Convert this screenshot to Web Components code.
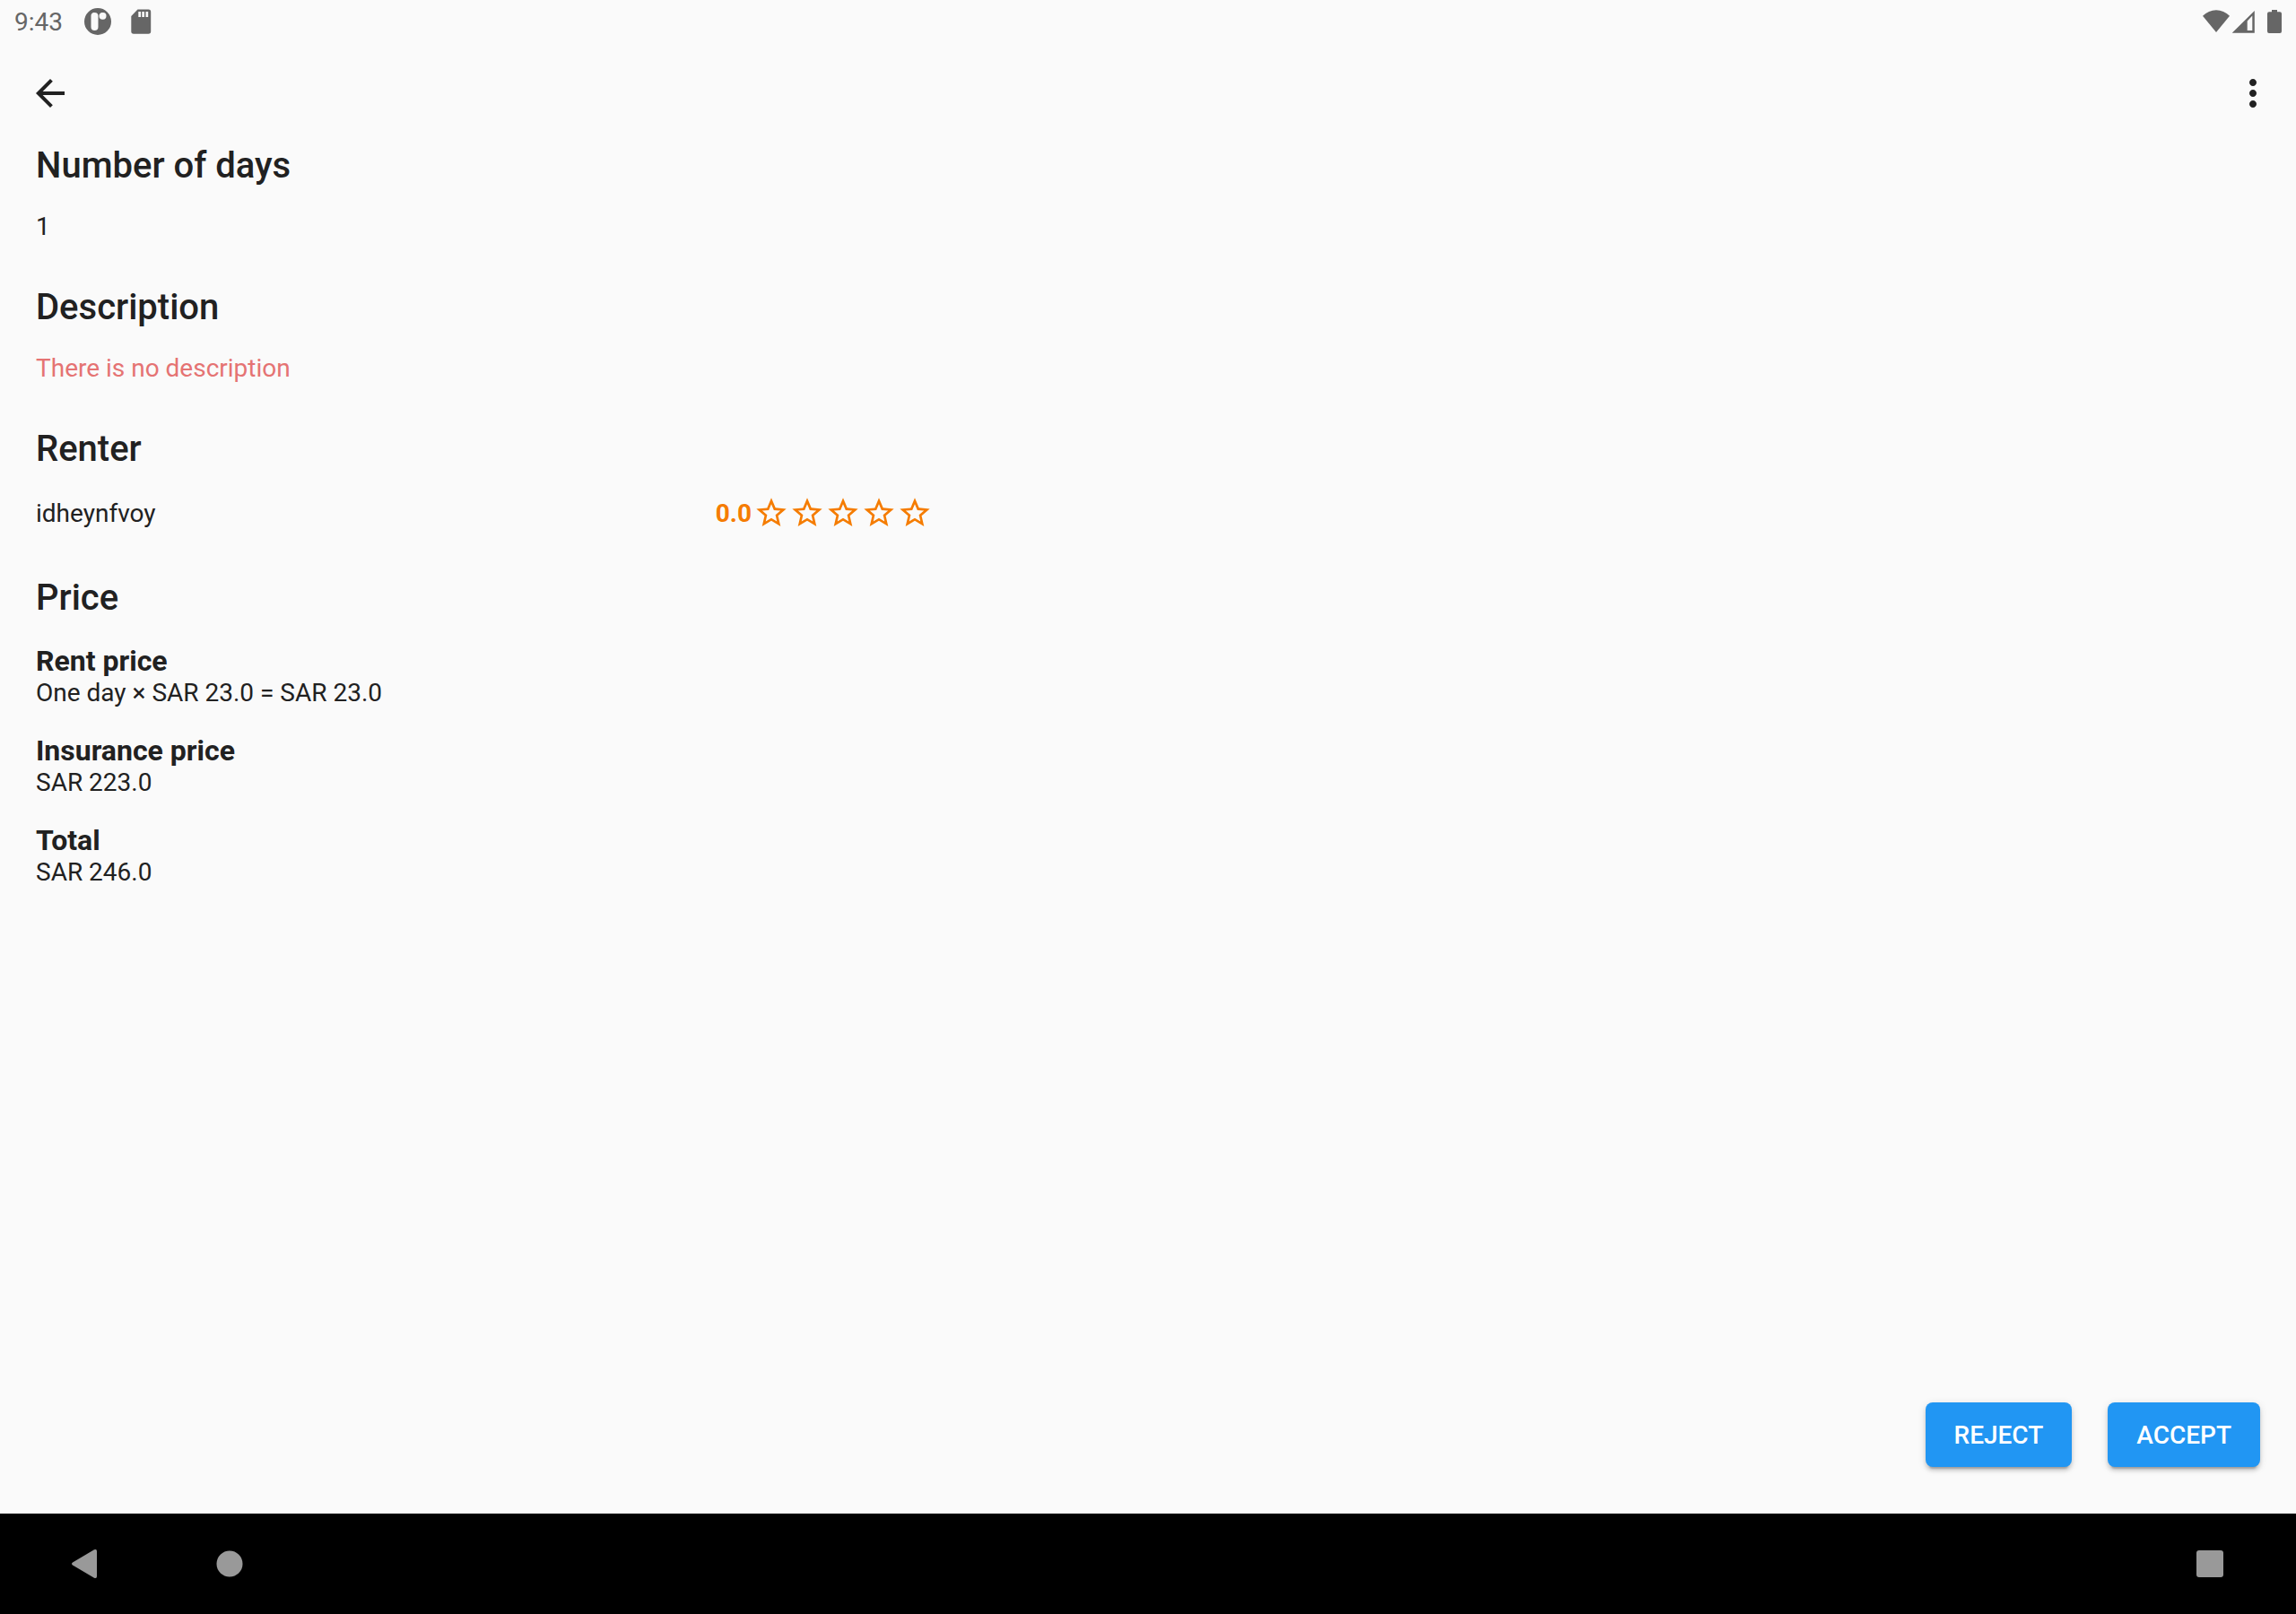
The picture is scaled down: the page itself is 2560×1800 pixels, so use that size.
<!DOCTYPE html>
<html lang="en">
<head>
<meta charset="utf-8">
<title>Rent request</title>
<style>
  html, body { height: 100%; }
  body { margin: 0; background: #fafafa; color: #212121; font: 400 28px/34px Roboto, sans-serif; }
</style>
</head>
<body>
<rent-page></rent-page>
<script>
function define(name, html) {
  const template = document.createElement('template');
  template.innerHTML = '<style>*{box-sizing:border-box}svg{display:block;flex:none}button{border:0;margin:0;padding:0;background:none;color:inherit;font:inherit;cursor:pointer}</style>' + html;
  customElements.define(name, class extends HTMLElement {
    constructor() {
      super();
      this.attachShadow({ mode: 'open' }).append(template.content.cloneNode(true));
    }
  });
}

define('status-bar', `
  <style>
    :host { display: flex; justify-content: space-between; height: 48px; padding: 0 16px; color: #666; fill: #666; }
    div { display: flex; align-items: center; }
    time { margin-right: 23px; padding-top: 2px; }
    .apps { gap: 16px; display: flex; }
  </style>
  <div>
    <time>9:43</time>
    <span class="apps">
      <svg width="32" height="32" viewBox="0 0 32 32"><path fill-rule="evenodd" d="M16 1a15 15 0 1 0 0 30a15 15 0 1 0 0-30zM11 6h1.500a4 4 0 0 1 4 4v12a4 4 0 0 1-8 0V10a4 4 0 0 1 2.500-4zM20.500 6H22a3.500 3.500 0 0 1 3.500 3.500a4 4 0 1 1-8 0.500a4 4 0 0 1 3-4z"/></svg>
      <svg width="32" height="32" viewBox="0 0 32 32"><path fill-rule="evenodd" d="M12.500 2.500H24.500a2.700 2.700 0 0 1 2.700 2.700V27a2.700 2.700 0 0 1-2.700 2.700H8A2.700 2.700 0 0 1 5.300 27V10zM13.300 5v6h2.700V5zM17.300 5v6H20V5zM21.500 5v6h2.700V5z"/></svg>
    </span>
  </div>
  <div>
    <svg width="32" height="32" viewBox="0 0 32 32"><path d="M0 9.700Q6.500 3.500 15 3.300Q23.500 3.500 30 9.700L15 28z"/></svg>
    <svg width="32" height="32" viewBox="0 0 32 32"><path fill-rule="evenodd" d="M25.800 4v24.700H0.700zM23.300 9.500L17.700 15.500V26h5.600z"/></svg>
    <svg width="24" height="32" viewBox="0 0 24 32"><path d="M13 3h6v2.300h3a2 2 0 0 1 2 2V27a2 2 0 0 1-2 2H10a2 2 0 0 1-2-2V7.300a2 2 0 0 1 2-2h3z"/></svg>
  </div>`);

define('app-toolbar', `
  <style>
    :host { display: flex; align-items: center; justify-content: space-between; height: 112px; padding: 0 24px 0 32px; fill: #212121; }
  </style>
  <button aria-label="Back"><svg width="48" height="48" viewBox="0 0 24 24"><path d="M20 11H7.830l5.590-5.590L12 4l-8 8 8 8 1.410-1.410L7.830 13H20v-2z"/></svg></button>
  <button aria-label="More options"><svg width="48" height="48" viewBox="0 0 24 24"><path d="M12 8c1.100 0 2-.9 2-2s-.9-2-2-2-2 .9-2 2 .9 2 2 2zm0 2c-1.100 0-2 .9-2 2s.9 2 2 2 2-.9 2-2-.9-2-2-2zm0 6c-1.100 0-2 .9-2 2s.9 2 2 2 2-.9 2-2-.9-2-2-2z"/></svg></button>`);

define('detail-section', `
  <style>
    :host { display: flex; flex-direction: column; gap: 26px; }
    h2 { margin: 0; font-size: 40px; line-height: 50px; font-weight: 500; }
  </style>
  <h2><slot name="title"></slot></h2>
  <slot></slot>`);

define('price-item', `
  <style>
    :host { display: block; }
    h3 { margin: 0; font-size: 32px; line-height: 38px; font-weight: 700; }
  </style>
  <h3><slot name="label"></slot></h3>
  <div><slot></slot></div>`);

const star = '<svg width="40" height="40" viewBox="0 0 24 24" aria-hidden="true"><path d="M22 9.240l-7.190-.620L12 2 9.190 8.630 2 9.240l5.460 4.730L5.820 21 12 17.270 18.180 21l-1.630-7.030L22 9.240zM12 15.400l-3.760 2.270 1-4.280-3.320-2.880 4.380-.380L12 6.100l1.710 4.040 4.380.380-3.320 2.880 1 4.280L12 15.400z"/></svg>';
define('star-rating', `
  <style>
    :host { display: flex; align-items: center; gap: 2px; height: 42px; color: #f57c00; fill: #f57c00; font-weight: 700; }
    .stars { display: flex; align-self: flex-start; }
  </style>
  <slot></slot><span class="stars">${star.repeat(5)}</span>`);

define('raised-button', `
  <style>
    :host { display: block; }
    button { display: block; height: 72px; padding: 2px 32px 0; border-radius: 8px; background: #2196f3; color: #fff; font-weight: 500;
      box-shadow: 0 6px 2px -4px rgba(0,0,0,.2), 0 4px 4px rgba(0,0,0,.14), 0 2px 10px rgba(0,0,0,.12); }
  </style>
  <button><slot></slot></button>`);

define('system-nav', `
  <style>
    :host { display: flex; align-items: center; gap: 96px; height: 112px; padding: 0 64px; background: #000; fill: #999; }
    .recent { margin-left: auto; }
  </style>
  <button aria-label="System back"><svg width="64" height="64" viewBox="0 0 64 64"><path d="M17 30.500L41 16.300Q44 15 44 18V46Q44 49 41 47.700L17 33.500Q15 32 17 30.500z"/></svg></button>
  <button aria-label="Home"><svg width="64" height="64" viewBox="0 0 64 64"><circle cx="32" cy="32" r="14.500"/></svg></button>
  <button class="recent" aria-label="Recent apps"><svg width="64" height="64" viewBox="0 0 64 64"><rect x="17" y="17" width="30" height="30" rx="3"/></svg></button>`);

define('rent-page', `
  <style>
    :host { display: flex; flex-direction: column; min-height: 100vh; }
    main { flex: 1; display: flex; flex-direction: column; gap: 48px; padding: 0 40px; }
    .empty { color: #e57373; }
    .renter { display: flex; align-items: center; justify-content: space-between; max-width: 1000px; }
    .prices { display: flex; flex-direction: column; gap: 28px; }
    footer { display: flex; justify-content: flex-end; gap: 40px; padding: 0 40px 52px; }
  </style>
  <status-bar></status-bar>
  <app-toolbar></app-toolbar>
  <main>
    <detail-section><span slot="title">Number of days</span><div>1</div></detail-section>
    <detail-section><span slot="title">Description</span><div class="empty">There is no description</div></detail-section>
    <detail-section><span slot="title">Renter</span>
      <div class="renter"><span>idheynfvoy</span><star-rating>0.0</star-rating></div>
    </detail-section>
    <detail-section><span slot="title">Price</span>
      <div class="prices">
        <price-item><span slot="label">Rent price</span>One day × SAR 23.0 = SAR 23.0</price-item>
        <price-item><span slot="label">Insurance price</span>SAR 223.0</price-item>
        <price-item><span slot="label">Total</span>SAR 246.0</price-item>
      </div>
    </detail-section>
  </main>
  <footer><raised-button>REJECT</raised-button><raised-button>ACCEPT</raised-button></footer>
  <system-nav></system-nav>`);
</script>
</body>
</html>
